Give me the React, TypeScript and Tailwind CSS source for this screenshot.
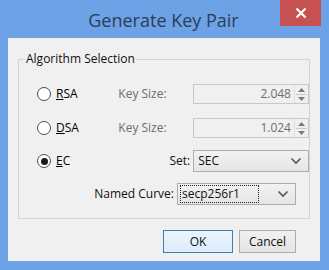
import React from "react";

const font = { fontFamily: '"Segoe UI", "Open Sans", "Noto Sans", sans-serif' };

function Radio({ checked }: { checked?: boolean }) {
  return (
    <span className="relative w-[14px] h-[14px] rounded-full border border-[#4d4d4d] bg-white flex items-center justify-center">
      {checked && <span className="w-[7px] h-[7px] rounded-full bg-[#1a1a1a]" />}
    </span>
  );
}

function Spinner({ value }: { value: string }) {
  return (
    <div className="w-[119px] h-[20px] border border-[#c8c8c8] bg-[#f0f0f0] flex items-center">
      <span className="flex-1 text-right pr-[3px] text-[#6d6d6d]">{value}</span>
      <div className="w-[14px] h-full flex flex-col items-center justify-center gap-[1px] text-[#8a8a8a] border-l border-[#e0e0e0]">
        <svg width="9" height="6" viewBox="0 0 9 6"><path d="M4.5 1 L8 5 L1 5 Z" fill="#7a7a7a" /></svg>
        <div className="w-[11px] h-px bg-[#c8c8c8]" />
        <svg width="9" height="6" viewBox="0 0 9 6"><path d="M1 1 L8 1 L4.5 5 Z" fill="#7a7a7a" /></svg>
      </div>
    </div>
  );
}

function Combo({ value, focused }: { value: string; focused?: boolean }) {
  return (
    <div className="w-[119px] h-[22px] border border-[#acacac] bg-gradient-to-b from-[#f2f2f2] to-[#e5e5e5] flex items-center">
      <span className={"ml-[3px] px-[1px] leading-[16px] text-[#111] flex-1 " + (focused ? "outline outline-1 outline-dotted outline-[#222] mr-[19px]" : "")}>{value}</span>
      {!focused && <span className="flex-1" />}
      <svg width="12" height="8" viewBox="0 0 12 8" className="mr-[6px]">
        <path d="M1.5 1.5 L6 6 L10.5 1.5" stroke="#555" strokeWidth="1.6" fill="none" />
      </svg>
    </div>
  );
}

export default function App() {
  return (
    <div className="w-[329px] h-[270px] bg-[#6da2e6] flex flex-col text-[12px]" style={font}>
      <div className="h-[38px] flex relative">
        <div className="flex-1 flex items-center justify-center pt-[2px] pr-[2px] text-[18px] text-[#2c3e57]">Generate Key Pair</div>
        <div className="absolute left-[280px] top-0 w-[41px] h-[26px] bg-[#c75050] flex items-center justify-center">
          <svg width="12" height="12" viewBox="0 0 12 12"><path d="M1.5 1.5 L10.5 10.5 M10.5 1.5 L1.5 10.5" stroke="white" strokeWidth="2.2" /></svg>
        </div>
      </div>
      <div className="ml-[8px] w-[312px] h-[223px] bg-[#f0f0f0] flex flex-col px-[10px]">
        <div className="mt-[21px] h-[160px] border border-[#d5d5d5] relative flex flex-col">
          <span className="absolute left-[6px] -top-[9px] px-[1px] bg-[#f0f0f0] text-[#111] leading-[16px]">Algorithm Selection</span>
          <div className="h-[22px] mt-[23px] flex items-center">
            <div className="ml-[18px] w-[62px] flex items-center gap-[5px]"><Radio /><span><u>R</u>SA</span></div>
            <span className="w-[77px] text-[#6d6d6d] ml-[21px]">Key Size:</span>
            <Spinner value="2.048" />
          </div>
          <div className="h-[22px] mt-[12px] flex items-center">
            <div className="ml-[18px] w-[62px] flex items-center gap-[5px]"><Radio /><span><u>D</u>SA</span></div>
            <span className="w-[77px] text-[#6d6d6d] ml-[21px]">Key Size:</span>
            <Spinner value="1.024" />
          </div>
          <div className="h-[22px] mt-[11px] flex items-center">
            <div className="ml-[18px] w-[62px] flex items-center gap-[5px]"><Radio checked /><span><u>E</u>C</span></div>
            <span className="w-[77px] ml-[21px] text-right pr-[3px] text-[#111]">Set:</span>
            <Combo value="SEC" />
          </div>
          <div className="h-[22px] mt-[11px] flex items-center">
            <span className="w-[157px] text-right pr-[3px] text-[#111] ml-[1px]">Named Curve:</span>
            <Combo value="secp256r1" focused />
          </div>
        </div>
        <div className="flex justify-end gap-[6px] mt-[11px] mr-[14px]">
          <button className="w-[70px] h-[23px] border border-[#3c7fb1] bg-gradient-to-b from-[#ecf4fc] to-[#dcecfc] text-[#111]">OK</button>
          <button className="w-[57px] h-[23px] border border-[#acacac] bg-gradient-to-b from-[#f0f0f0] to-[#e5e5e5] text-[#111]">Cancel</button>
        </div>
      </div>
    </div>
  );
}
